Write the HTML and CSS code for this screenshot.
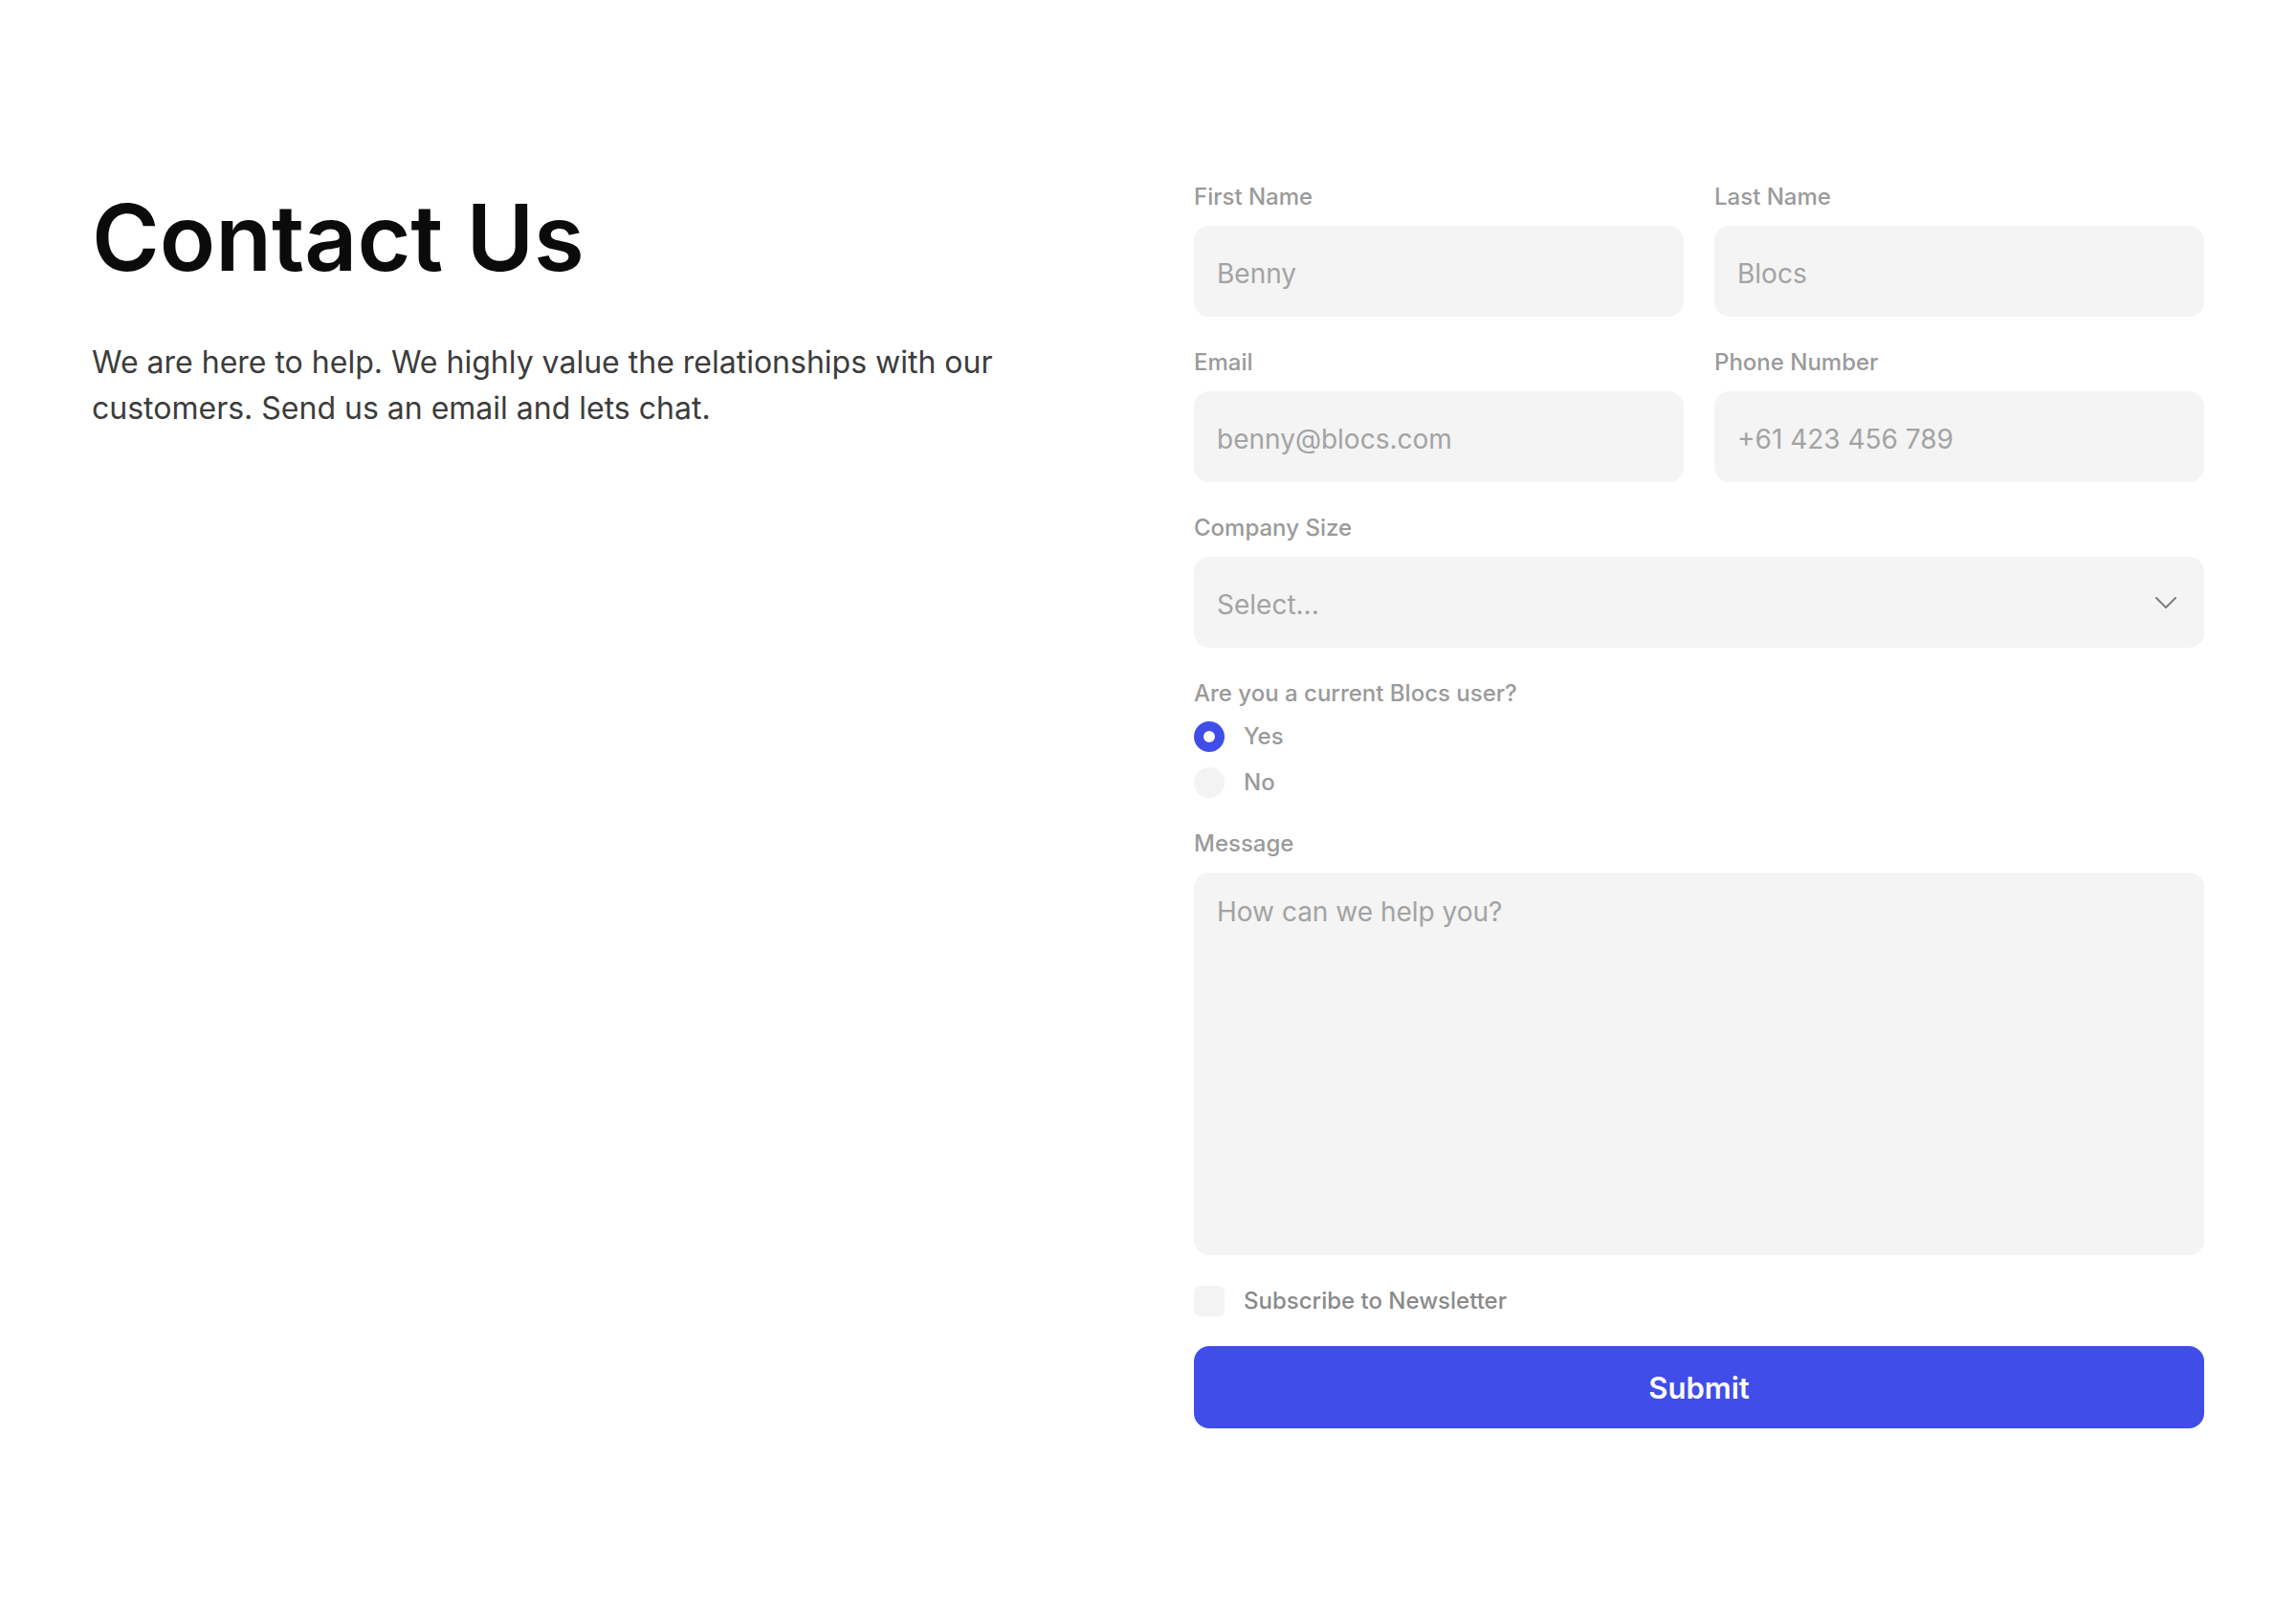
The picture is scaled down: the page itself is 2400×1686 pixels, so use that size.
FILE: index.html
```html
<!DOCTYPE html>
<html lang="en">
<head>
<meta charset="utf-8">
<title>Contact Us</title>
<link rel="stylesheet" href="styles.css">
</head>
<body>
<main class="page">
  <section class="intro">
    <h1 class="title">Contact Us</h1>
    <p class="lead">We are here to help. We highly value the relationships with our customers. Send us an email and lets chat.</p>
  </section>
  <form class="form">
    <div class="row">
      <div class="field">
        <label class="label" for="first">First Name</label>
        <input class="control" id="first" type="text" placeholder="Benny">
      </div>
      <div class="field">
        <label class="label" for="last">Last Name</label>
        <input class="control" id="last" type="text" placeholder="Blocs">
      </div>
    </div>
    <div class="row">
      <div class="field">
        <label class="label" for="email">Email</label>
        <input class="control" id="email" type="email" placeholder="benny@blocs.com">
      </div>
      <div class="field">
        <label class="label" for="phone">Phone Number</label>
        <input class="control" id="phone" type="tel" placeholder="+61 423 456 789">
      </div>
    </div>
    <div class="field">
      <label class="label" for="size">Company Size</label>
      <div class="select-wrap">
        <select class="control select" id="size">
          <option>Select...</option>
          <option>1-10</option>
          <option>11-50</option>
          <option>51-200</option>
          <option>200+</option>
        </select>
        <svg class="chevron" width="22" height="12" viewBox="0 0 22 12" aria-hidden="true"><path d="M1 1 L11 11 L21 1" fill="none" stroke="#7d7d7d" stroke-width="2" stroke-linecap="round" stroke-linejoin="round"/></svg>
      </div>
    </div>
    <div class="field">
      <span class="label label-tight">Are you a current Blocs user?</span>
      <div class="radios">
        <label class="choice"><input class="radio" type="radio" name="user" checked><span>Yes</span></label>
        <label class="choice"><input class="radio" type="radio" name="user"><span>No</span></label>
      </div>
    </div>
    <div class="field">
      <label class="label" for="message">Message</label>
      <textarea class="control textarea" id="message" placeholder="How can we help you?"></textarea>
    </div>
    <label class="choice check-row"><input class="checkbox" type="checkbox"><span>Subscribe to Newsletter</span></label>
    <button class="submit" type="button">Submit</button>
  </form>
</main>
</body>
</html>
```
FILE: styles.css
```css
* { box-sizing: border-box; }

body {
  margin: 0;
  background: #ffffff;
  font-family: "Inter", "Noto Sans", sans-serif;
}

.page {
  display: grid;
  grid-template-columns: 1056px 1056px;
  column-gap: 96px;
  align-items: start;
  padding: 190px 96px 0;
}

.title {
  margin: 1px 0 0;
  font-size: 96px;
  line-height: 115px;
  font-weight: 600;
  color: #0b0b0b;
}

.lead {
  margin: 49px 0 0;
  font-size: 32px;
  line-height: 48px;
  color: #3c3c3c;
}

.form {
  display: flex;
  flex-direction: column;
  gap: 32px;
}

.row {
  display: grid;
  grid-template-columns: 1fr 1fr;
  column-gap: 32px;
}

.field {
  display: flex;
  flex-direction: column;
}

.label {
  font-size: 24px;
  line-height: 32px;
  font-weight: 500;
  color: #9a9a9a;
  margin-bottom: 14px;
}

.label-tight { margin-bottom: 13px; }

.control {
  width: 100%;
  height: 95px;
  padding: 4px 24px 0;
  border: 0;
  border-radius: 16px;
  background: #f4f4f4;
  font-family: "Inter", "Noto Sans", sans-serif;
  font-size: 28px;
  color: #a3a3a3;
  outline: none;
}

.control::placeholder { color: #a3a3a3; opacity: 1; }

.select-wrap { position: relative; }

.select {
  appearance: none;
  -webkit-appearance: none;
}

.chevron {
  position: absolute;
  right: 29px;
  top: 50%;
  margin-top: -6px;
  pointer-events: none;
}

.radios {
  display: flex;
  flex-direction: column;
  gap: 16px;
}

.choice {
  display: flex;
  align-items: center;
  gap: 20px;
  font-size: 24px;
  line-height: 32px;
  font-weight: 500;
  color: #9a9a9a;
}

.radio {
  appearance: none;
  -webkit-appearance: none;
  margin: 0;
  width: 32px;
  height: 32px;
  border-radius: 50%;
  background: #f3f3f3;
  flex: none;
}

.radio:checked {
  background: #ffffff;
  border: 10px solid #404de9;
}

.textarea {
  height: 400px;
  padding: 22px 24px;
  line-height: 1.4;
  resize: none;
  display: block;
}

.check-row {
  color: #8a8a8a;
}

.checkbox {
  appearance: none;
  -webkit-appearance: none;
  margin: 0;
  width: 32px;
  height: 32px;
  border-radius: 7px;
  background: #f3f3f3;
  flex: none;
}

.submit {
  margin-top: -1px;
  height: 86px;
  border: 0;
  border-radius: 16px;
  background: #404de9;
  color: #ffffff;
  font-family: "Inter", "Noto Sans", sans-serif;
  font-size: 31px;
  font-weight: 600;
}
```
